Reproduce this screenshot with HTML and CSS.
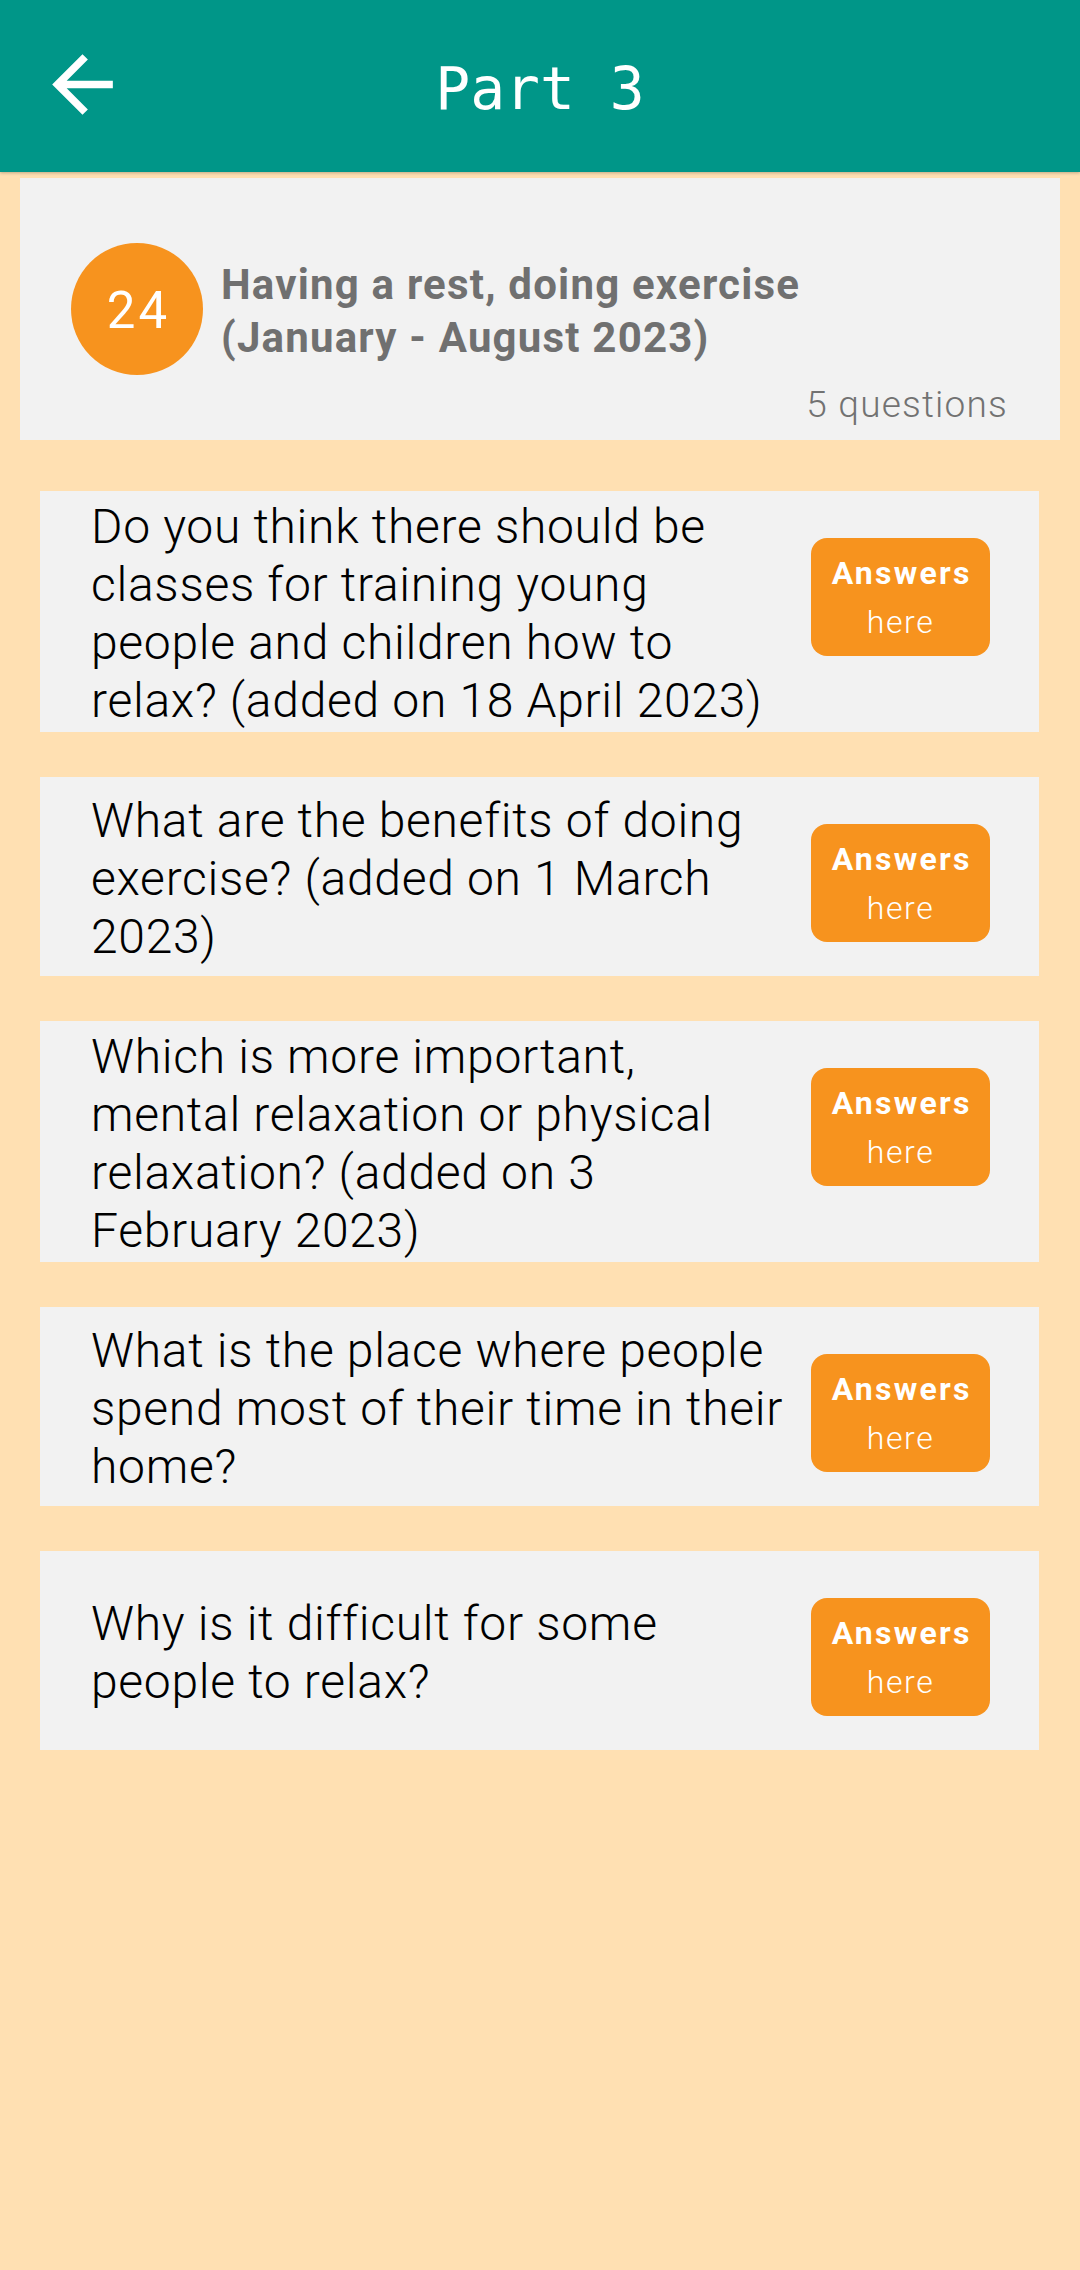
FILE: index.html
```html
<!DOCTYPE html>
<html lang="en">
<head>
<meta charset="utf-8">
<title>Part 3</title>
<link rel="stylesheet" href="styles.css">
</head>
<body>
<header class="appbar">
  <div class="appbar-left">
    <svg class="back-icon" viewBox="0 0 24 24" aria-hidden="true"><path d="M20 11H7.83l5.59-5.59L12 4l-8 8 8 8 1.41-1.41L7.83 13H20v-2z" fill="#ffffff"/></svg>
  </div>
  <h1 class="appbar-title">Part 3</h1>
  <div class="appbar-right"></div>
</header>

<main class="content">
  <section class="topic-card">
    <div class="topic-row">
      <div class="topic-num">24</div>
      <div class="topic-title">Having a rest, doing exercise<br>(January - August 2023)</div>
    </div>
    <div class="topic-count">5 questions</div>
  </section>

  <ul class="question-list">
    <li class="question-card">
      <p class="question-text">Do you think there should be classes for training young people and children how to relax? (added on 18 April 2023)</p>
      <div class="answer-btn"><span class="answer-strong">Answers</span><span class="answer-sub">here</span></div>
    </li>
    <li class="question-card">
      <p class="question-text">What are the benefits of doing exercise? (added on 1 March 2023)</p>
      <div class="answer-btn"><span class="answer-strong">Answers</span><span class="answer-sub">here</span></div>
    </li>
    <li class="question-card">
      <p class="question-text">Which is more important, mental relaxation or physical relaxation? (added on 3 February 2023)</p>
      <div class="answer-btn"><span class="answer-strong">Answers</span><span class="answer-sub">here</span></div>
    </li>
    <li class="question-card">
      <p class="question-text">What is the place where people spend most of their time in their home?</p>
      <div class="answer-btn"><span class="answer-strong">Answers</span><span class="answer-sub">here</span></div>
    </li>
    <li class="question-card">
      <p class="question-text">Why is it difficult for some people to relax?</p>
      <div class="answer-btn"><span class="answer-strong">Answers</span><span class="answer-sub">here</span></div>
    </li>
  </ul>
</main>
</body>
</html>
```

FILE: styles.css
```css
* {
  box-sizing: border-box;
}

html, body {
  margin: 0;
  padding: 0;
}

body {
  width: 1080px;
  min-height: 2270px;
  background: #FFE0B2;
  font-family: Roboto, "Noto Sans", "Liberation Sans", sans-serif;
}

.appbar {
  height: 172px;
  background: #009688;
  display: grid;
  grid-template-columns: 1fr auto 1fr;
  align-items: center;
  box-shadow: 0 1px 3px rgba(0, 0, 0, 0.25);
  position: relative;
  z-index: 1;
}

.appbar-left {
  padding-left: 37px;
  display: flex;
  align-items: center;
  height: 100%;
  padding-bottom: 3px;
}

.back-icon {
  width: 91px;
  height: 91px;
  display: block;
}

.appbar-title {
  margin: 0;
  padding-top: 6px;
  font-family: "DejaVu Sans Mono", "Liberation Mono", monospace;
  font-weight: normal;
  font-size: 58px;
  color: #ffffff;
  letter-spacing: 0;
}

.content {
  padding: 6px 20px 0;
}

.topic-card {
  background: #F2F2F2;
  padding: 65px 52px 14px 51px;
}

.topic-row {
  display: flex;
  align-items: center;
  gap: 18px;
}

.topic-num {
  flex: none;
  width: 132px;
  height: 132px;
  border-radius: 50%;
  background: #F7931E;
  color: #ffffff;
  font-size: 51px;
  font-weight: 400;
  letter-spacing: 3px;
  display: flex;
  align-items: center;
  justify-content: center;
  padding: 2px 0 0 3px;
}

.topic-title {
  font-size: 42px;
  font-weight: 700;
  line-height: 53px;
  letter-spacing: 1.2px;
  color: #707070;
  padding-top: 3px;
}

.topic-count {
  margin-top: 8px;
  text-align: right;
  font-size: 37px;
  font-weight: 300;
  letter-spacing: 1.2px;
  color: #727272;
}

.question-list {
  list-style: none;
  margin: 51px 0 0;
  padding: 0 21px 0 20px;
  display: flex;
  flex-direction: column;
  gap: 45px;
}

.question-card {
  background: #F2F2F2;
  min-height: 199px;
  padding: 7px 49px 2px 51px;
  display: flex;
  align-items: center;
}

.question-text {
  flex: 1;
  margin: 0;
  font-size: 48px;
  font-weight: 300;
  line-height: 58px;
  letter-spacing: 0.7px;
  color: #000000;
  padding-right: 22px;
}

.answer-btn {
  flex: none;
  align-self: flex-start;
  margin-top: 40px;
  width: 179px;
  height: 118px;
  border-radius: 16px;
  background: #F7931E;
  color: #ffffff;
  display: flex;
  flex-direction: column;
  align-items: center;
  padding-top: 11px;
}

.answer-strong {
  font-size: 32px;
  font-weight: 700;
  line-height: 49px;
  letter-spacing: 0.07em;
  margin-right: -0.07em;
}

.answer-sub {
  font-size: 32px;
  font-weight: 300;
  line-height: 49px;
  letter-spacing: 0.05em;
}
```
